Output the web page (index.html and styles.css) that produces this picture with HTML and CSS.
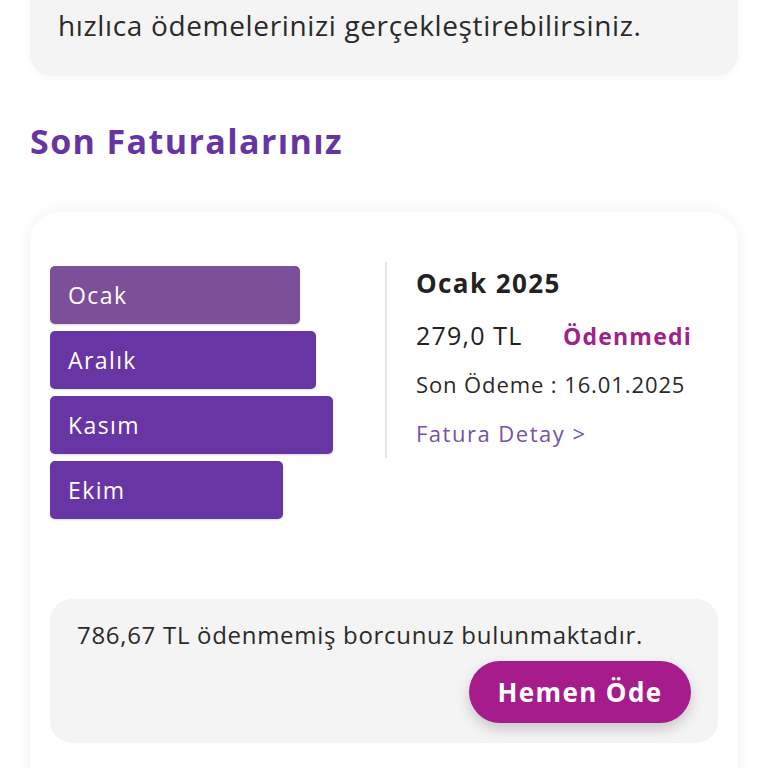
FILE: index.html
```html
<!DOCTYPE html>
<html lang="tr">
<head>
<meta charset="utf-8">
<link rel="stylesheet" href="styles.css">
</head>
<body>
<div class="page">
  <div class="info-card">
    <p class="info-text">hızlıca ödemelerinizi gerçekleştirebilirsiniz.</p>
  </div>

  <h2 class="section-title">Son Faturalarınız</h2>

  <div class="bill-card">
    <div class="bill-top">
      <div class="months">
        <div class="month month-active" style="width:250px">Ocak</div>
        <div class="month" style="width:266px">Aralık</div>
        <div class="month" style="width:283px">Kasım</div>
        <div class="month" style="width:233px">Ekim</div>
      </div>
      <div class="divider"></div>
      <div class="detail">
        <div class="detail-title">Ocak 2025</div>
        <div class="detail-amount-row">
          <span class="detail-amount">279,0 TL</span>
          <span class="detail-status">Ödenmedi</span>
        </div>
        <div class="detail-due">Son Ödeme : 16.01.2025</div>
        <a class="detail-link">Fatura Detay &gt;</a>
      </div>
    </div>

    <div class="debt-box">
      <p class="debt-text">786,67 TL ödenmemiş borcunuz bulunmaktadır.</p>
      <div class="debt-actions">
        <button class="pay-btn">Hemen Öde</button>
      </div>
    </div>
  </div>
</div>
</body>
</html>
```

FILE: styles.css
```css
* { box-sizing: border-box; }
html, body { margin: 0; padding: 0; background: #ffffff; }
body { font-family: "Open Sans", "Noto Sans", sans-serif; color: #222; overflow: hidden; height: 768px; }

.page { padding: 0 30px; }

.info-card {
  background: #f4f4f4;
  border-radius: 0 0 22px 22px;
  padding: 3px 28px 0 28px;
  height: 76px;
  box-shadow: 0 2px 6px rgba(0,0,0,0.03);
}
.info-text {
  margin: 0;
  font-family: "Open Sans", sans-serif;
  font-size: 28px;
  line-height: 44px;
  color: #2a2a2a;
  letter-spacing: 0.65px;
}

.section-title {
  margin: 43px 0 0 0;
  font-family: "Open Sans", sans-serif;
  font-weight: 700;
  font-size: 34px;
  line-height: 44px;
  color: #6735a3;
  letter-spacing: 1.4px;
}

.bill-card {
  margin-top: 49px;
  background: #fff;
  border-radius: 30px;
  box-shadow: 0 0 16px rgba(0,0,0,0.06);
  padding: 54px 20px 22px 20px;
  height: 600px;
}

.bill-top { display: flex; align-items: flex-start; }
.months { display: flex; flex-direction: column; gap: 7px; width: 335px; }
.month {
  height: 58px;
  background: #6836a4;
  border-radius: 5px;
  color: #fff;
  font-size: 23px;
  letter-spacing: 1.4px;
  padding-left: 18px;
  display: flex;
  align-items: center;
  box-shadow: 0 1px 2px rgba(0,0,0,0.15);
}
.month-active { background: #7b4f99; }

.divider { width: 2px; height: 196px; background: #e6e6e6; margin-top: -4px; }

.detail { padding-left: 29px; display: flex; flex-direction: column; }
.detail-title { font-weight: 700; font-size: 26px; line-height: 34px; color: #222; letter-spacing: 1.4px; }
.detail-amount-row { display: flex; align-items: baseline; margin-top: 18px; }
.detail-amount { font-size: 25px; line-height: 34px; color: #222; width: 147px; letter-spacing: 1.2px; }
.detail-status { font-weight: 700; font-size: 23px; color: #a0218a; letter-spacing: 1.2px; }
.detail-due { font-size: 22px; line-height: 30px; margin-top: 17px; color: #2a2a2a; letter-spacing: 0.9px; }
.detail-link { font-size: 22px; line-height: 30px; margin-top: 19px; color: #7552a6; letter-spacing: 1.5px; }

.debt-box {
  margin-top: 80px;
  background: #f4f4f4;
  border-radius: 22px;
  padding: 18px 27px 20px 27px;
}
.debt-text { margin: 0; font-size: 24px; line-height: 36px; color: #2a2a2a; letter-spacing: 0.7px; }
.debt-actions { display: flex; justify-content: flex-end; margin-top: 8px; }
.pay-btn {
  border: none;
  background: #a61c8c;
  color: #fff;
  font-family: "Open Sans", sans-serif;
  font-weight: 700;
  font-size: 26px;
  letter-spacing: 1.4px;
  width: 222px;
  height: 62px;
  border-radius: 31px;
  box-shadow: 0 6px 14px rgba(0,0,0,0.18);
}
```
